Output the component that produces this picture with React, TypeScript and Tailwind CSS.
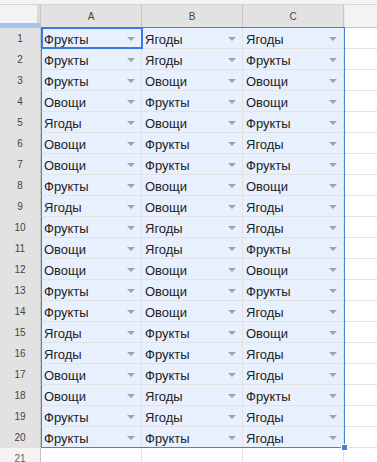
import React from "react";

const data: string[][] = [
  ["Фрукты", "Ягоды", "Ягоды"],
  ["Фрукты", "Ягоды", "Фрукты"],
  ["Фрукты", "Овощи", "Овощи"],
  ["Овощи", "Фрукты", "Овощи"],
  ["Ягоды", "Овощи", "Фрукты"],
  ["Овощи", "Фрукты", "Ягоды"],
  ["Овощи", "Фрукты", "Фрукты"],
  ["Фрукты", "Овощи", "Овощи"],
  ["Ягоды", "Овощи", "Ягоды"],
  ["Фрукты", "Ягоды", "Ягоды"],
  ["Овощи", "Ягоды", "Фрукты"],
  ["Овощи", "Овощи", "Овощи"],
  ["Фрукты", "Овощи", "Фрукты"],
  ["Фрукты", "Овощи", "Ягоды"],
  ["Ягоды", "Фрукты", "Овощи"],
  ["Ягоды", "Фрукты", "Ягоды"],
  ["Овощи", "Фрукты", "Ягоды"],
  ["Овощи", "Ягоды", "Фрукты"],
  ["Фрукты", "Ягоды", "Ягоды"],
  ["Фрукты", "Фрукты", "Ягоды"],
];

const Arrow = () => (
  <svg width="8" height="4" viewBox="0 0 8 4" className="absolute right-[6px] top-[9px]">
    <path d="M0 0 L8 0 L4 4 Z" fill="#a0a4a8" />
  </svg>
);

const Cell = ({ value }: { value: string }) => (
  <div className="relative w-[101px] h-full shrink-0 border-r border-[#e2e2e2] bg-[#e8f0fe] pl-[3px] pt-[2px] text-[13px] leading-[19px] text-[#222]">
    {value}
    <Arrow />
  </div>
);

export default function App() {
  return (
    <div className="w-[377px] h-[462px] overflow-hidden bg-white font-['Liberation_Sans',Arial,sans-serif]">
      {/* strip above header */}
      <div className="h-[5px] bg-[#f3f3f3] border-b border-[#d4d4d4]" />

      {/* column header */}
      <div className="flex h-[23px] border-b border-[#c4c4c4]">
        <div className="relative w-[41px] shrink-0 bg-[#f3f3f3] border-r border-[#c4c4c4]">
          <div className="absolute right-0 top-0 h-full w-[3px] bg-[#dadada]" />
          <div className="absolute left-0 bottom-0 h-[4px] w-full bg-[#a9c1ea]" />
        </div>
        {["A", "B", "C"].map((c) => (
          <div
            key={c}
            className="w-[101px] shrink-0 bg-[#e2e2e2] border-r border-[#c4c4c4] flex items-center justify-center text-[10px] text-[#444]"
          >
            {c}
          </div>
        ))}
        <div className="flex-1 bg-[#f3f3f3] border-l border-[#e8e8e8]" />
      </div>

      {/* body */}
      <div className="relative">
        {data.map((row, i) => (
          <div key={i} className="flex h-[21px] border-b border-[#e2e2e2]">
            <div className="w-[41px] shrink-0 bg-[#e2e2e2] border-r border-[#c4c4c4] flex items-center justify-center pt-[1px] text-[10px] text-[#444]">
              {i + 1}
            </div>
            {row.map((v, j) => (
              <Cell key={j} value={v} />
            ))}
            <div className="flex-1" />
          </div>
        ))}
        <div className="flex h-[21px] border-b border-[#e2e2e2]">
          <div className="w-[41px] shrink-0 bg-[#f3f3f3] border-r border-[#c4c4c4] flex items-center justify-center text-[10px] text-[#666]">
            21
          </div>
          <div className="w-[101px] shrink-0 border-r border-[#e2e2e2]" />
          <div className="w-[101px] shrink-0 border-r border-[#e2e2e2]" />
          <div className="w-[101px] shrink-0 border-r border-[#e2e2e2]" />
          <div className="flex-1" />
        </div>

        {/* selection range */}
        <div className="pointer-events-none absolute left-[41px] top-[-1px] w-[304px] h-[421px] border border-[#4a7fd6]" />
        {/* active cell */}
        <div className="pointer-events-none absolute left-[41px] top-[-1px] w-[102px] h-[22px] border-2 border-[#3b78e7]" />
        {/* fill handle */}
        <div className="pointer-events-none absolute left-[341px] top-[416px] w-[7px] h-[7px] bg-[#4a7fd6] border border-white" />
      </div>
    </div>
  );
}
